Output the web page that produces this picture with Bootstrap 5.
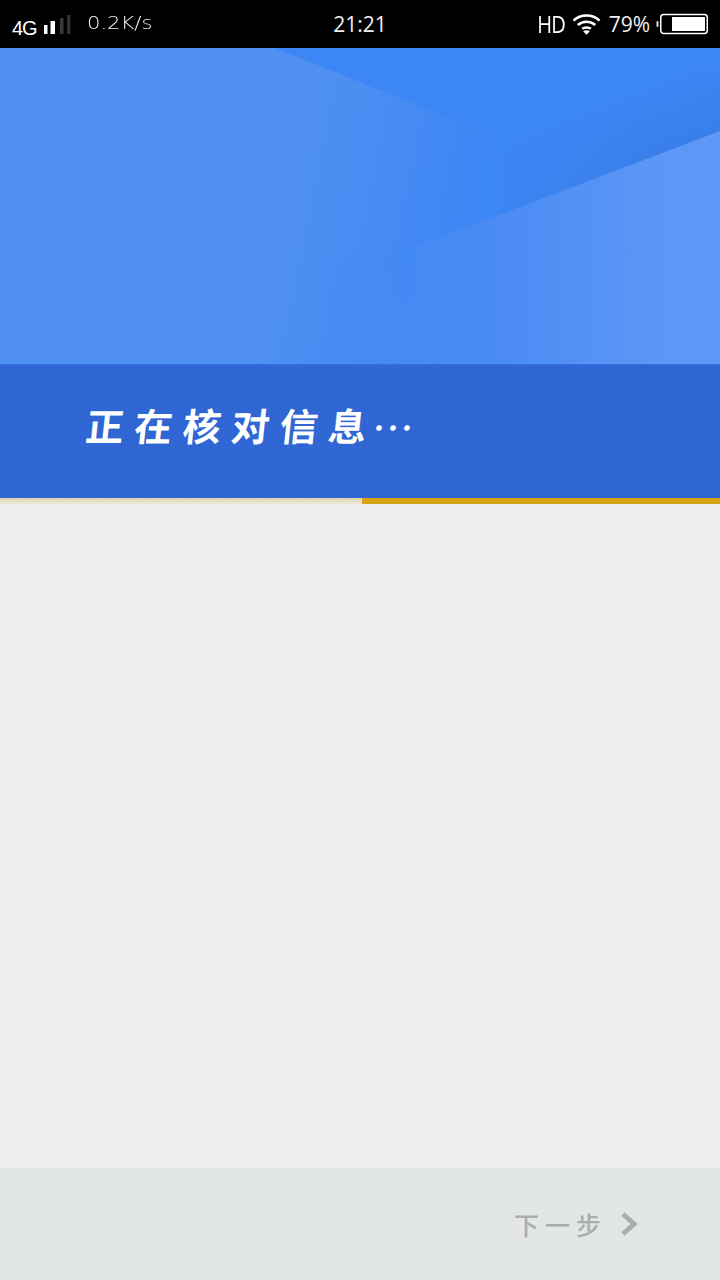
<!DOCTYPE html>
<html lang="zh">
<head>
<meta charset="utf-8">
<title>正在核对信息</title>
<link rel="stylesheet" href="https://cdn.jsdelivr.net/npm/bootstrap@5.3.0/dist/css/bootstrap.min.css">
<style>
html,body{margin:0;height:1280px;overflow:hidden}
body{background:#eeeeee;font-family:"Liberation Sans","Noto Sans CJK SC",sans-serif}
.screen{width:720px;height:1280px}
.sbar{height:48px;background:#000;color:#fff;padding:0 12px}
.sbar-side{flex:1 1 0;min-width:0}
.net{font-size:20px;letter-spacing:-1px;line-height:1;margin-top:8px}
.speed{font-family:"DejaVu Sans",sans-serif;font-weight:200;font-size:17px;line-height:1;color:#f5f5f5;margin-left:16px;margin-bottom:2px;transform:scaleX(1.24);transform-origin:left}
.clock{font-family:"Open Sans",sans-serif;font-size:21px;line-height:1;color:#f0f0f0}
.hd{font-family:"Open Sans",sans-serif;font-size:24px;line-height:1;margin-right:7px;letter-spacing:-1px;transform:scaleX(.84);transform-origin:right}
.pct{font-family:"Open Sans",sans-serif;font-size:21px;line-height:1;color:#f0f0f0;margin:0 6px 0 8px}
.hero{height:316px;line-height:0}
.hero svg{display:block}
.banner{height:134px;background-color:#2f66d3;background-image:radial-gradient(rgba(255,255,255,.025) 1px,transparent 1px);background-size:5px 5px;padding-left:83px;padding-top:30px;border-top:1px solid #3570dc}
.banner-text{font-family:"Noto Sans CJK SC",sans-serif;font-weight:700;font-size:38px;letter-spacing:10.5px;line-height:60px;color:#fff;white-space:nowrap;transform:skewX(-6deg);transform-origin:left bottom}
.banner-dots{letter-spacing:0;font-size:42px;margin-left:-5px;font-weight:400;vertical-align:-3px}
.progress-strip{height:6px;background:linear-gradient(#d8d1ae,#eee9d8)}
.progress-fill{width:358px;background:#d8a311}
.bodyarea{height:664px;background:#eeeeee}
.foot{height:112px;background:#e2e6e7;padding-right:82px}
.next-label{font-family:"Noto Sans CJK SC",sans-serif;font-weight:500;font-size:25px;letter-spacing:6px;color:#a9adae;line-height:1;margin-left:-2px}
.next-arrow{margin-left:13px}
</style>
</head>
<body>
<div class="screen d-flex flex-column">
  <div class="sbar d-flex align-items-center">
    <div class="sbar-side d-flex align-items-center">
      <span class="net">4G</span>
      <svg width="30" height="24" viewBox="0 0 30 24" class="ms-1" aria-hidden="true">
        <rect x="3" y="13" width="3.5" height="9" fill="#fff"/>
        <rect x="9.5" y="9" width="4.5" height="13" fill="#fff"/>
        <rect x="19" y="6" width="3.5" height="16" fill="#3a3a3a"/>
        <rect x="26" y="3" width="3.5" height="19" fill="#303030"/>
      </svg>
      <span class="speed">0.2K/s</span>
    </div>
    <div class="clock">21:21</div>
    <div class="sbar-side d-flex align-items-center justify-content-end">
      <span class="hd">HD</span>
      <svg width="29" height="24" viewBox="0 0 30 24" class="me-0" aria-hidden="true">
        <g fill="none" stroke="#fff" stroke-width="2.6">
          <path d="M1.5 8.5 C9 1.5 21 1.5 28.5 8.5"/>
          <path d="M6 13 C11 8.5 19 8.5 24 13"/>
          <path d="M10.5 17 C13 15 17 15 19.5 17"/>
        </g>
        <path d="M15 23 L11.5 19.5 C13.5 18 16.5 18 18.5 19.5Z" fill="#fff"/>
      </svg>
      <span class="pct">79%</span>
      <svg width="52" height="22" viewBox="0 0 52 22" aria-hidden="true">
        <rect x="0.5" y="8" width="2" height="6" rx="1" fill="#ddd"/>
        <rect x="4.75" y="1.5" width="46.5" height="19" rx="3" fill="none" stroke="#fff" stroke-width="1.5"/>
        <rect x="16" y="4" width="33" height="14" fill="#fff"/>
      </svg>
    </div>
  </div>

  <div class="hero">
    <svg width="720" height="316" viewBox="0 0 720 316" aria-hidden="true">
      <defs>
        <linearGradient id="g1" x1="285" y1="90" x2="480" y2="130" gradientUnits="userSpaceOnUse">
          <stop offset="0" stop-color="#5090f2"/>
          <stop offset=".45" stop-color="#4a8cf2"/>
          <stop offset="1" stop-color="#3d86f5"/>
        </linearGradient>
        <linearGradient id="g3" x1="415" y1="0" x2="720" y2="0" gradientUnits="userSpaceOnUse">
          <stop offset="0" stop-color="#478af3"/>
          <stop offset=".25" stop-color="#4a8bf3"/>
          <stop offset=".58" stop-color="#5592f5"/>
          <stop offset=".8" stop-color="#5c97f7"/>
          <stop offset="1" stop-color="#5f97f5"/>
        </linearGradient>
        <linearGradient id="g4" x1="627" y1="49" x2="650" y2="110" gradientUnits="userSpaceOnUse">
          <stop offset="0" stop-color="#3a7fe8" stop-opacity="0"/>
          <stop offset="1" stop-color="#3a7fe8"/>
        </linearGradient>
        <linearGradient id="g6" x1="500" y1="0" x2="640" y2="0" gradientUnits="userSpaceOnUse">
          <stop offset="0" stop-color="#000"/>
          <stop offset="1" stop-color="#fff"/>
        </linearGradient>
        <mask id="m1" maskUnits="userSpaceOnUse" x="0" y="0" width="720" height="316">
          <rect width="720" height="316" fill="url(#g6)"/>
        </mask>
        <linearGradient id="g7" x1="0" y1="205" x2="0" y2="270" gradientUnits="userSpaceOnUse">
          <stop offset="0" stop-color="#478af3" stop-opacity="0"/>
          <stop offset="1" stop-color="#478af3"/>
        </linearGradient>
        <linearGradient id="g8" x1="320" y1="0" x2="415" y2="0" gradientUnits="userSpaceOnUse">
          <stop offset="0" stop-color="#000"/>
          <stop offset="1" stop-color="#fff"/>
        </linearGradient>
        <mask id="m2" maskUnits="userSpaceOnUse" x="0" y="0" width="720" height="316">
          <rect width="720" height="316" fill="url(#g8)"/>
        </mask>
      </defs>
      <rect width="720" height="316" fill="url(#g1)"/>
      <rect x="320" y="205" width="95" height="111" fill="url(#g7)" mask="url(#m2)"/>
      <polygon points="275,0 720,0 720,84 520,160 520,98" fill="#3d86f5"/>
      <polygon points="500,167 720,83 720,20 500,20" fill="url(#g4)" mask="url(#m1)"/>
      <polygon points="720,83 415,199 415,316 720,316" fill="url(#g3)"/>
    </svg>
  </div>

  <div class="banner">
    <div class="banner-text">正在核对信息<span class="banner-dots">…</span></div>
  </div>
  <div class="progress-strip d-flex justify-content-end">
    <div class="progress-fill"></div>
  </div>
  <div class="bodyarea"></div>
  <div class="foot d-flex align-items-center justify-content-end">
    <span class="next-label">下一步</span>
    <svg width="18" height="26" viewBox="0 0 18 26" class="next-arrow" aria-hidden="true">
      <path d="M3 3 L14 13 L3 23" fill="none" stroke="#a9adae" stroke-width="5"/>
    </svg>
  </div>
</div>
<script src="https://cdn.jsdelivr.net/npm/bootstrap@5.3.0/dist/js/bootstrap.bundle.min.js"></script>
</body>
</html>
